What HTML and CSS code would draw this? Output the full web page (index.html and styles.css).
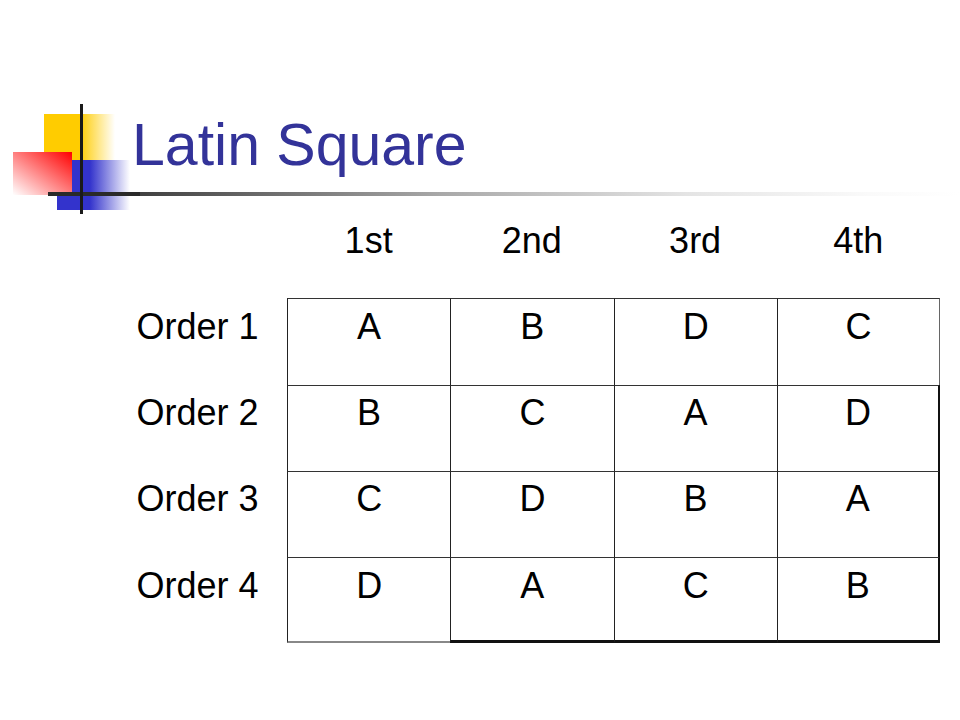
FILE: index.html
```html
<!DOCTYPE html>
<html>
<head>
<meta charset="utf-8">
<link rel="stylesheet" href="styles.css">
</head>
<body>
<div class="slide">
  <header class="head">
    <h1 class="title">Latin Square</h1>
    <div class="rule"></div>
    <svg class="logo" width="140" height="116" viewBox="0 100 140 116" xmlns="http://www.w3.org/2000/svg">
      <defs>
        <linearGradient id="gy" x1="0" y1="0" x2="1" y2="0">
          <stop offset="0" stop-color="#ffcc00"/>
          <stop offset="0.5" stop-color="#ffcc00"/>
          <stop offset="1" stop-color="#ffcc00" stop-opacity="0"/>
        </linearGradient>
        <linearGradient id="gb" x1="0" y1="0" x2="1" y2="0">
          <stop offset="0" stop-color="#3333cc"/>
          <stop offset="0.45" stop-color="#3333cc"/>
          <stop offset="1" stop-color="#3333cc" stop-opacity="0"/>
        </linearGradient>
        <linearGradient id="gr" x1="1" y1="0" x2="0" y2="1">
          <stop offset="0" stop-color="#ff0000"/>
          <stop offset="1" stop-color="#ffffff"/>
        </linearGradient>
      </defs>
      <rect x="44" y="114" width="71" height="46" fill="url(#gy)"/>
      <rect x="57" y="160" width="73" height="50" fill="url(#gb)"/>
      <rect x="13" y="152" width="59" height="43" fill="url(#gr)"/>
      <rect x="48" y="192" width="92" height="4" fill="#2a2a2a"/>
      <rect x="80" y="104" width="3" height="110" fill="#1a1a1a"/>
    </svg>
  </header>
  <div class="grid">
    <div class="cell"></div>
    <div class="cell">1st</div>
    <div class="cell">2nd</div>
    <div class="cell">3rd</div>
    <div class="cell">4th</div>

    <div class="cell">Order 1</div>
    <div class="cell box">A</div>
    <div class="cell box">B</div>
    <div class="cell box">D</div>
    <div class="cell box end end-thin">C</div>

    <div class="cell">Order 2</div>
    <div class="cell box">B</div>
    <div class="cell box">C</div>
    <div class="cell box">A</div>
    <div class="cell box end">D</div>

    <div class="cell">Order 3</div>
    <div class="cell box">C</div>
    <div class="cell box">D</div>
    <div class="cell box">B</div>
    <div class="cell box end">A</div>

    <div class="cell">Order 4</div>
    <div class="cell box last last-gray">D</div>
    <div class="cell box last">A</div>
    <div class="cell box last">C</div>
    <div class="cell box end last">B</div>
  </div>
</div>
</body>
</html>
```

FILE: styles.css
```css
html, body {
  margin: 0;
  padding: 0;
  background: #ffffff;
}

.slide {
  width: 960px;
  height: 720px;
  overflow: hidden;
  font-family: "Liberation Sans", Arial, sans-serif;
  color: #000;
}

.head {
  position: relative;
  height: 212px;
}

.title {
  margin: 0;
  padding: 116px 0 0 132px;
  font-weight: normal;
  font-size: 59px;
  line-height: 59px;
  color: #333399;
}

.rule {
  margin: 17px 0 0 48px;
  height: 4px;
  background: linear-gradient(to right, #2a2a2a 0%, #3a3a3a 8%, #a8a8a8 43%, #e4e4e4 70%, #fafafa 90%, #ffffff 100%);
}

.logo {
  position: absolute;
  left: 0;
  top: 100px;
}

.grid {
  display: grid;
  grid-template-columns: 179px repeat(4, 163.25px);
  grid-auto-rows: 86.25px;
  margin-left: 108px;
}

.cell {
  box-sizing: border-box;
  font-size: 36px;
  line-height: 43.2px;
  text-align: center;
  padding-top: 6.6px;
}

.box {
  border-top: 1px solid #333;
  border-left: 1px solid #222;
  padding-top: 5.6px;
}

.end {
  border-right: 2px solid #111;
}

.end-thin {
  border-right: 1px solid #666;
}

.last {
  border-bottom: 3px solid #111;
}

.last-gray {
  border-bottom: 2px solid #888;
}
```
